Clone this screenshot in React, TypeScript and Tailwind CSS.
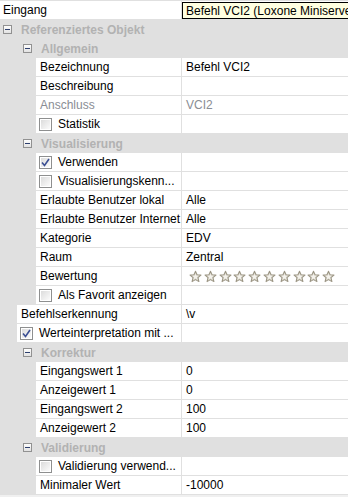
import React from "react";

type Row =
    | { kind: "group"; level: number; label: string }
    | {
          kind: "item";
          level: number;
          label: string;
          value?: string;
          checkbox?: boolean;
          checked?: boolean;
          disabled?: boolean;
          stars?: boolean;
          tooltip?: boolean;
      };

const rows: Row[] = [
    { kind: "item", level: 0, label: "Eingang", tooltip: true },
    { kind: "group", level: 0, label: "Referenziertes Objekt" },
    { kind: "group", level: 1, label: "Allgemein" },
    { kind: "item", level: 2, label: "Bezeichnung", value: "Befehl VCI2" },
    { kind: "item", level: 2, label: "Beschreibung" },
    { kind: "item", level: 2, label: "Anschluss", value: "VCI2", disabled: true },
    { kind: "item", level: 2, label: "Statistik", checkbox: true },
    { kind: "group", level: 1, label: "Visualisierung" },
    { kind: "item", level: 2, label: "Verwenden", checkbox: true, checked: true },
    { kind: "item", level: 2, label: "Visualisierungskenn...", checkbox: true },
    { kind: "item", level: 2, label: "Erlaubte Benutzer lokal", value: "Alle" },
    { kind: "item", level: 2, label: "Erlaubte Benutzer Internet", value: "Alle" },
    { kind: "item", level: 2, label: "Kategorie", value: "EDV" },
    { kind: "item", level: 2, label: "Raum", value: "Zentral" },
    { kind: "item", level: 2, label: "Bewertung", stars: true },
    { kind: "item", level: 2, label: "Als Favorit anzeigen", checkbox: true },
    { kind: "item", level: 1, label: "Befehlserkennung", value: "\\v" },
    { kind: "item", level: 1, label: "Werteinterpretation mit ...", checkbox: true, checked: true },
    { kind: "group", level: 1, label: "Korrektur" },
    { kind: "item", level: 2, label: "Eingangswert 1", value: "0" },
    { kind: "item", level: 2, label: "Anzeigewert 1", value: "0" },
    { kind: "item", level: 2, label: "Eingangswert 2", value: "100" },
    { kind: "item", level: 2, label: "Anzeigewert 2", value: "100" },
    { kind: "group", level: 1, label: "Validierung" },
    { kind: "item", level: 2, label: "Validierung verwend...", checkbox: true },
    { kind: "item", level: 2, label: "Minimaler Wert", value: "-10000" },
];

const gutter = [0, 17, 36];

function Minus() {
    return (
        <div className="w-[9px] h-[9px] border border-[#919191] bg-gradient-to-b from-[#fdfdfd] to-[#e2e2e2] flex items-center justify-center shrink-0">
            <div className="w-[5px] h-px bg-[#2d3f6e]" />
        </div>
    );
}

function CheckBox({ checked }: { checked?: boolean }) {
    return (
        <div className="w-[13px] h-[13px] border border-[#8e8f8f] bg-white p-px shrink-0">
            <div className="w-full h-full bg-gradient-to-br from-[#dcdcdc] to-[#fbfbfb] flex items-center justify-center">
                {checked && (
                    <svg width="9" height="9" viewBox="0 0 9 9">
                        <path d="M1 4.5 L3.5 7.5 L8 1" fill="none" stroke="#3b4f93" strokeWidth="1.6" />
                    </svg>
                )}
            </div>
        </div>
    );
}

function Star() {
    return (
        <svg width="13" height="13" viewBox="0 0 14 13">
            <path
                d="M7 0.8 L8.7 4.6 L12.9 5 L9.7 7.8 L10.7 12 L7 9.8 L3.3 12 L4.3 7.8 L1.1 5 L5.3 4.6 Z"
                fill="#d9d5ca"
                stroke="#9b9584"
                strokeWidth="1.1"
                strokeLinejoin="round"
            />
            <path d="M7 3.5 L7.9 5.6 L10.2 5.8 L8.5 7.3 L9 9.6 L7 8.4 L5 9.6 L5.5 7.3 L3.8 5.8 L6.1 5.6 Z" fill="#f4f2ec" />
        </svg>
    );
}

export default function App() {
    return (
        <div className="w-[348px] h-[497px] bg-[#f0f0f0] overflow-hidden text-[12px] text-black" style={{ fontFamily: '"Liberation Sans", Arial, sans-serif' }}>
            <div className="h-px bg-[#e0e0e0]" />
            {rows.map((r, i) => {
                if (r.kind === "group") {
                    return (
                        <div key={i} className="h-[19px] bg-[#e0e0e0] flex items-center">
                            <div className="flex items-center" style={{ paddingLeft: 3 + r.level * 20 }}>
                                <Minus />
                                <span className="ml-[9px] font-bold text-[#b2b2b2] whitespace-nowrap">{r.label}</span>
                            </div>
                        </div>
                    );
                }
                const g = gutter[r.level];
                return (
                    <div key={i} className="h-[19px] flex bg-[#e0e0e0]">
                        <div className="shrink-0" style={{ width: g }} />
                        <div
                            className="bg-white border-b border-[#e0e0e0] flex items-center overflow-hidden whitespace-nowrap"
                            style={{ width: 181 - g }}
                        >
                            {r.checkbox ? (
                                <div className="flex items-center pl-[3px]">
                                    <CheckBox checked={r.checked} />
                                    <span className="ml-[6px]">{r.label}</span>
                                </div>
                            ) : (
                                <span className={r.disabled ? "pl-[4px] text-[#8a8d94]" : r.level === 0 ? "pl-[3px]" : "pl-[4px]"}>{r.label}</span>
                            )}
                        </div>
                        <div className="flex-1 bg-white border-l border-b border-[#e0e0e0] flex items-center overflow-hidden whitespace-nowrap relative">
                            {r.tooltip ? (
                                <div className="absolute left-0 top-px h-[17px] w-[200px] bg-[#ffffe1] border border-black flex items-center pl-[3px]">
                                    Befehl VCI2 (Loxone Miniserver)
                                </div>
                            ) : r.stars ? (
                                <div className="flex items-center gap-[1.8px] pl-[7px] pt-px">
                                    {Array.from({ length: 10 }).map((_, k) => (
                                        <Star key={k} />
                                    ))}
                                </div>
                            ) : (
                                <span className={r.disabled ? "pl-[4px] text-[#8a8d94]" : "pl-[4px]"}>{r.value}</span>
                            )}
                        </div>
                    </div>
                );
            })}
        </div>
    );
}
